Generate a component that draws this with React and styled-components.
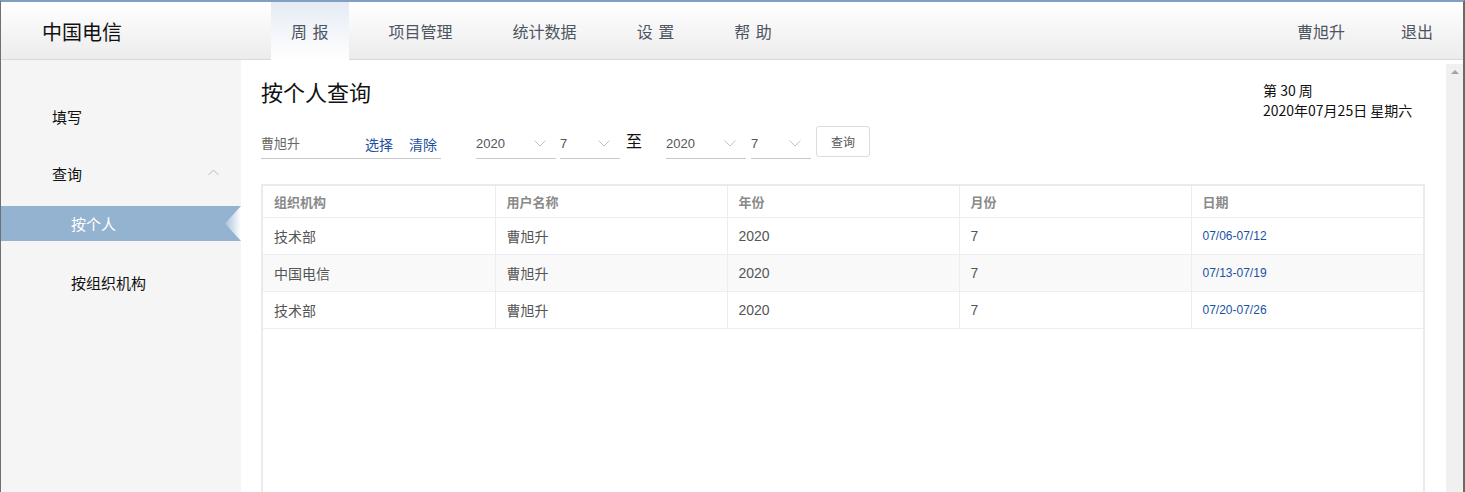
import React from "react";
import styled, { createGlobalStyle } from "styled-components";

const GlobalStyle = createGlobalStyle`
  html, body {
    margin: 0;
    padding: 0;
    background: #fff;
    overflow: hidden;
  }
  body {
    font-family: "Liberation Sans", "Noto Sans CJK SC", sans-serif;
  }
`;

const Frame = styled.div`
  width: 1465px;
  height: 492px;
  box-sizing: border-box;
  border-top: 2px solid #819fc2;
  border-left: 1px solid #707070;
  border-right: 2px solid #6a6a6a;
  display: flex;
  flex-direction: column;
  overflow: hidden;
`;

const Header = styled.div`
  height: 57px;
  flex-shrink: 0;
  display: flex;
  align-items: stretch;
  background: linear-gradient(#ffffff, #ececec);
  border-bottom: 1px solid #dadada;
`;

const Logo = styled.div`
  width: 270px;
  padding-left: 41px;
  box-sizing: border-box;
  display: flex;
  align-items: center;
  font-family: "Noto Sans CJK SC", sans-serif;
  font-size: 20px;
  color: #111;
  padding-top: 2px;
`;

const Nav = styled.div`
  display: flex;
  gap: 20px;
  flex: 1;
`;

const NavItem = styled.div`
  padding: 0 20px;
  display: flex;
  align-items: center;
  font-family: "Noto Sans CJK SC", sans-serif;
  font-size: 16px;
  color: #4e5561;
  white-space: pre;
  word-spacing: ${(p) => (p.$spaced ? "2px" : "0")};
  background: ${(p) => (p.$active ? "linear-gradient(#e5ebf4, #ffffff)" : "none")};
  margin-bottom: ${(p) => (p.$active ? "-1px" : "0")};
`;

const UserArea = styled.div`
  display: flex;
  align-items: center;
  gap: 56px;
  padding-right: 30px;
  font-family: "Noto Sans CJK SC", sans-serif;
  font-size: 16px;
  color: #4e5561;
`;

const Body = styled.div`
  flex: 1;
  display: flex;
  min-height: 0;
`;

const Sidebar = styled.div`
  width: 240px;
  flex-shrink: 0;
  background: #f5f5f5;
  padding-top: 28px;
  box-sizing: border-box;
  font-family: "Noto Sans CJK SC", sans-serif;
  font-size: 15px;
  color: #111;
`;

const MenuGroup = styled.div`
  height: 57px;
  display: flex;
  align-items: center;
  justify-content: space-between;
  padding: 0 22px 0 51px;
`;

const Chevron = styled.svg`
  width: 11px;
  height: 7px;
  margin-top: -2px;
`;

const SubItem = styled.div`
  position: relative;
  height: ${(p) => (p.$active ? 35 : 36)}px;
  display: flex;
  align-items: center;
  padding-left: 70px;
  margin-top: ${(p) => p.$top || 0}px;
  background: ${(p) => (p.$active ? "#94b3d1" : "transparent")};
  color: ${(p) => (p.$active ? "#fff" : "#111")};
`;

const Notch = styled.div`
  position: absolute;
  right: 0;
  top: 0;
  width: 16px;
  height: 35px;
  background: linear-gradient(to right, #a8c1da, #ffffff);
  clip-path: polygon(100% 0, 0 50%, 100% 100%);
`;

const Main = styled.div`
  flex: 1;
  padding: 15px 21px 0 20px;
  min-width: 0;
  display: flex;
  flex-direction: column;
`;

const TopRow = styled.div`
  display: flex;
  justify-content: space-between;
  align-items: flex-start;
`;

const Title = styled.div`
  font-family: "Noto Sans CJK SC", sans-serif;
  font-size: 22px;
  color: #111;
  line-height: 32px;
`;

const WeekInfo = styled.div`
  font-family: "Noto Sans CJK SC", sans-serif;
  font-size: 14px;
  line-height: 20px;
  color: #111;
  width: 162px;
  margin-top: 5px;
`;

const FormRow = styled.div`
  display: flex;
  align-items: flex-end;
  margin-top: 7px;
  height: 32px;
`;

const UserInput = styled.div`
  width: 180px;
  height: 31px;
  box-sizing: border-box;
  border-bottom: 1px solid #c8c8c8;
  display: flex;
  align-items: center;
  font-family: "Noto Sans CJK SC", sans-serif;
  font-size: 13px;
  color: #666;
  padding-bottom: 2px;
`;

const InputValue = styled.span`
  flex: 1;
`;

const LinkText = styled.span`
  font-size: 14px;
  color: #1d4f9c;
  margin-left: ${(p) => p.$gap || 0}px;
  margin-top: 4px;
  margin-right: ${(p) => p.$right || 0}px;
`;

const Select = styled.div`
  width: ${(p) => p.$w}px;
  height: 31px;
  box-sizing: border-box;
  border-bottom: 1px solid #c8c8c8;
  margin-left: ${(p) => p.$ml}px;
  display: flex;
  align-items: center;
  justify-content: space-between;
  font-family: "Liberation Sans", sans-serif;
  font-size: 13px;
  color: #555;
  padding: 0 10px 0 0;
`;

const SelChevron = styled.svg`
  width: 12px;
  height: 7px;
`;

const ToText = styled.div`
  font-family: "Noto Sans CJK SC", sans-serif;
  font-size: 16px;
  color: #111;
  margin-left: 6px;
  margin-right: 24px;
  align-self: center;
  margin-top: -6px;
`;

const Button = styled.div`
  width: 54px;
  height: 31px;
  box-sizing: border-box;
  margin-left: 5px;
  border: 1px solid #dcdcdc;
  border-radius: 3px;
  display: flex;
  align-items: center;
  justify-content: center;
  font-family: "Noto Sans CJK SC", sans-serif;
  font-size: 12px;
  color: #555;
  align-self: flex-start;
  margin-top: -1px;
`;

const TableBox = styled.div`
  margin-top: 25px;
  flex: 1;
  border: 2px solid #e9ebf1;
  border-bottom: none;
  background: #fff;
`;

const Table = styled.table`
  width: 100%;
  border-collapse: collapse;
  table-layout: fixed;
`;

const Th = styled.th`
  height: 31px;
  padding: 0 0 0 11px;
  text-align: left;
  font-family: "Noto Sans CJK SC", sans-serif;
  font-size: 13px;
  font-weight: 700;
  color: #8a8a8a;
  border-right: 1px solid #ebedf2;
  border-bottom: 1px solid #ebedf2;
  &:last-child {
    border-right: none;
  }
`;

const Tr = styled.tr`
  background: ${(p) => (p.$alt ? "#f9f9fa" : "#fff")};
`;

const Td = styled.td`
  height: 36px;
  padding: 0 0 0 11px;
  font-family: "Liberation Sans", "Noto Sans CJK SC", sans-serif;
  font-size: ${(p) => (p.$date ? "12px" : "14px")};
  color: ${(p) => (p.$date ? "#1a52a3" : "#555")};
  border-right: 1px solid #ebedf2;
  border-bottom: 1px solid #ebedf2;
  &:last-child {
    border-right: none;
  }
`;

const Scrollbar = styled.div`
  width: 17px;
  flex-shrink: 0;
  margin-top: 4px;
  background: #f0f0f0;
  display: flex;
  justify-content: center;
  padding-top: 6px;
  box-sizing: border-box;
`;

const ScrollArrow = styled.div`
  width: 0;
  height: 0;
  border-left: 4px solid transparent;
  border-right: 4px solid transparent;
  border-bottom: 4px solid #a3a3a3;
`;

const rows = [
  ["技术部", "曹旭升", "2020", "7", "07/06-07/12"],
  ["中国电信", "曹旭升", "2020", "7", "07/13-07/19"],
  ["技术部", "曹旭升", "2020", "7", "07/20-07/26"],
];

const Down = () => (
  <SelChevron viewBox="0 0 12 7">
    <path d="M0.5 0.5 L6 6 L11.5 0.5" fill="none" stroke="#c4c4c4" strokeWidth="1" />
  </SelChevron>
);

export default function App() {
  return (
    <>
      <GlobalStyle />
      <Frame>
        <Header>
          <Logo>中国电信</Logo>
          <Nav>
            <NavItem $active $spaced>周 报</NavItem>
            <NavItem>项目管理</NavItem>
            <NavItem>统计数据</NavItem>
            <NavItem $spaced>设 置</NavItem>
            <NavItem $spaced>帮 助</NavItem>
          </Nav>
          <UserArea>
            <span>曹旭升</span>
            <span>退出</span>
          </UserArea>
        </Header>
        <Body>
          <Sidebar>
            <MenuGroup>填写</MenuGroup>
            <MenuGroup>
              <span>查询</span>
              <Chevron viewBox="0 0 11 7">
                <path d="M0.5 6 L5.5 1 L10.5 6" fill="none" stroke="#bbb" strokeWidth="1" />
              </Chevron>
            </MenuGroup>
            <SubItem $active $top={4}>
              按个人
              <Notch />
            </SubItem>
            <SubItem $top={23}>按组织机构</SubItem>
          </Sidebar>
          <Main>
            <TopRow>
              <Title>按个人查询</Title>
              <WeekInfo>
                <div>第 30 周</div>
                <div>2020年07月25日 星期六</div>
              </WeekInfo>
            </TopRow>
            <FormRow>
              <UserInput>
                <InputValue>曹旭升</InputValue>
                <LinkText>选择</LinkText>
                <LinkText $gap={16} $right={4}>清除</LinkText>
              </UserInput>
              <Select $w={80} $ml={35}>
                2020
                <Down />
              </Select>
              <Select $w={60} $ml={4}>
                7
                <Down />
              </Select>
              <ToText>至</ToText>
              <Select $w={80} $ml={0}>
                2020
                <Down />
              </Select>
              <Select $w={60} $ml={5}>
                7
                <Down />
              </Select>
              <Button>查询</Button>
            </FormRow>
            <TableBox>
              <Table>
                <thead>
                  <tr>
                    <Th>组织机构</Th>
                    <Th>用户名称</Th>
                    <Th>年份</Th>
                    <Th>月份</Th>
                    <Th>日期</Th>
                  </tr>
                </thead>
                <tbody>
                  {rows.map((r, i) => (
                    <Tr key={i} $alt={i === 1}>
                      <Td>{r[0]}</Td>
                      <Td>{r[1]}</Td>
                      <Td>{r[2]}</Td>
                      <Td>{r[3]}</Td>
                      <Td $date>{r[4]}</Td>
                    </Tr>
                  ))}
                </tbody>
              </Table>
            </TableBox>
          </Main>
          <Scrollbar>
            <ScrollArrow />
          </Scrollbar>
        </Body>
      </Frame>
    </>
  );
}
